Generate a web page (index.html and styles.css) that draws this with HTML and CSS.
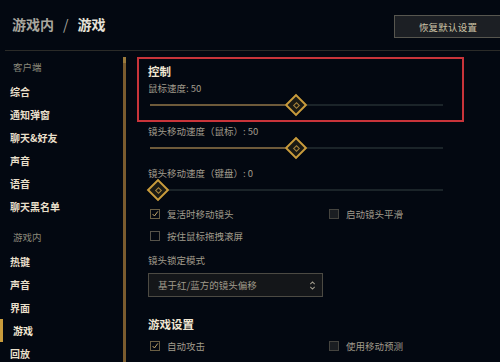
FILE: index.html
```html
<!DOCTYPE html>
<html lang="zh">
<head>
<meta charset="utf-8">
<link rel="stylesheet" href="styles.css">
</head>
<body>
<div class="app">
  <header class="header">
    <div class="crumb"><span class="crumb-parent">游戏内</span><span class="crumb-sep">/</span><span class="crumb-cur">游戏</span></div>
    <button class="reset">恢复默认设置</button>
  </header>
  <div class="main">
    <nav class="sidebar">
      <div class="nav-label">客户端</div>
      <div class="nav-item">综合</div>
      <div class="nav-item">通知弹窗</div>
      <div class="nav-item">聊天&amp;好友</div>
      <div class="nav-item">声音</div>
      <div class="nav-item">语音</div>
      <div class="nav-item">聊天黑名单</div>
      <div class="nav-label gap">游戏内</div>
      <div class="nav-item">热键</div>
      <div class="nav-item">声音</div>
      <div class="nav-item">界面</div>
      <div class="nav-item active">游戏</div>
      <div class="nav-item">回放</div>
    </nav>
    <div class="scrollbar"></div>
    <section class="content">
      <div class="highlight">
        <div class="section-title">控制</div>
        <div class="field-label">鼠标速度: 50</div>
        <div class="slider">
          <div class="track"></div>
          <div class="fill" style="width:146px"></div>
          <div class="thumb" style="left:137px"><span class="thumb-inner"></span></div>
        </div>
      </div>
      <div class="group">
        <div class="field-label">镜头移动速度（鼠标）: 50</div>
        <div class="slider">
          <div class="track"></div>
          <div class="fill" style="width:146px"></div>
          <div class="thumb" style="left:137px"><span class="thumb-inner"></span></div>
        </div>
        <div class="field-label spaced">镜头移动速度（键盘）: 0</div>
        <div class="slider">
          <div class="track"></div>
          <div class="fill" style="width:8px"></div>
          <div class="thumb" style="left:-1px"><span class="thumb-inner"></span></div>
        </div>
        <div class="checks">
          <label class="check"><span class="box checked"><svg viewBox="0 0 10 10" width="10" height="10"><polyline points="2,5 4.3,7.5 8.5,1.8" fill="none" stroke="#c8aa6e" stroke-width="1.2"/></svg></span>复活时移动镜头</label>
          <label class="check"><span class="box filled"></span>启动镜头平滑</label>
          <label class="check"><span class="box"></span>按住鼠标拖拽滚屏</label>
        </div>
        <div class="field-label lock">镜头锁定模式</div>
        <div class="select">
          <span>基于红/蓝方的镜头偏移</span>
          <svg class="arrows" viewBox="0 0 8 12" width="7" height="11"><polyline points="1.5,4.5 4,2 6.5,4.5" fill="none" stroke="#a09b8c" stroke-width="1.2"/><polyline points="1.5,7.5 4,10 6.5,7.5" fill="none" stroke="#a09b8c" stroke-width="1.2"/></svg>
        </div>
        <div class="section-title game">游戏设置</div>
        <div class="checks">
          <label class="check"><span class="box checked"><svg viewBox="0 0 10 10" width="10" height="10"><polyline points="2,5 4.3,7.5 8.5,1.8" fill="none" stroke="#c8aa6e" stroke-width="1.2"/></svg></span>自动攻击</label>
          <label class="check"><span class="box filled"></span>使用移动预测</label>
          <label class="check"><span class="box"></span>显示敌方技能范围指示器（敌人视野）</label>
          <label class="check"><span class="box"></span>始终显示英雄名字</label>
        </div>
      </div>
    </section>
  </div>
</div>
</body>
</html>
```

FILE: styles.css
```css
* { box-sizing: border-box; margin: 0; padding: 0; }
html, body { width: 500px; height: 362px; overflow: hidden; }
body {
  background: #030811;
  font-family: "Noto Sans CJK SC", "Noto Sans", sans-serif;
  color: #a09b8c;
}
.app { display: flex; flex-direction: column; height: 362px; }
.header {
  height: 51px;
  margin-left: 5px;
  padding-left: 7px;
  display: flex;
  align-items: flex-start;
  justify-content: space-between;
  border-bottom: 1px solid #2b2b28;
}
.crumb {
  margin-top: 14px;
  font-size: 14px;
  font-weight: 700;
  line-height: 20px;
  display: flex;
  gap: 9px;
}
.crumb-parent { color: #a8a69e; }
.crumb-sep { color: #a8a69e; font-weight: 400; }
.crumb-cur { color: #e6e2d8; }
.reset {
  margin-top: 15px;
  width: 108px;
  height: 23px;
  margin-right: -2px;
  background: #1c1f24;
  border: 1px solid #57564f;
  color: #cdc3a6;
  font-family: inherit;
  font-size: 9.5px;
  letter-spacing: 0.2px;
}
.main { flex: 1; display: flex; min-height: 0; }
.sidebar { width: 123px; flex-shrink: 0; }
.nav-label {
  height: 20px;
  line-height: 20px;
  margin-top: 6px;
  margin-bottom: 3px;
  padding-left: 13px;
  font-size: 9.5px;
  color: #8a8779;
}
.nav-label.gap { margin-top: 9px; }
.nav-item {
  height: 23px;
  line-height: 23px;
  padding-left: 10px;
  font-size: 10px;
  font-weight: 700;
  color: #e8dfca;
}
.nav-item.active {
  border-left: 3px solid #c89b3c;
  padding-left: 10px;
  color: #f0e6d2;
}
.scrollbar {
  width: 3px;
  flex-shrink: 0;
  margin-top: 6px;
  background: linear-gradient(#9a7a3c 0 6px, #7a5b2e 6px);
}
.content { flex: 1; padding: 6px 0 0 11px; }
.highlight {
  width: 327px;
  border: 2px solid #c9343a;
  padding: 5px 0 5px 9px;
}
.section-title {
  font-size: 11.5px;
  font-weight: 700;
  line-height: 14px;
  color: #f0e6d2;
}
.field-label {
  font-size: 9.5px;
  line-height: 14px;
  color: #a09b8c;
}
.highlight .field-label { margin-top: 3px; }
.field-label.spaced { margin-top: 8px; }
.slider {
  position: relative;
  width: 293px;
  height: 20px;
  margin-left: 2px;
}
.track {
  position: absolute;
  left: 0; right: 0; top: 9px;
  height: 2px;
  background: #1b2429;
}
.fill {
  position: absolute;
  left: 0; top: 9px;
  height: 2px;
  background: #6e5a3a;
}
.thumb {
  position: absolute;
  top: 1px;
  width: 18px;
  height: 18px;
  display: flex;
  align-items: center;
  justify-content: center;
}
.thumb::before {
  content: "";
  position: absolute;
  width: 12px;
  height: 12px;
  transform: rotate(45deg);
  border: 2px solid #c89b3c;
  background: #1a1a14;
}
.thumb-inner {
  position: relative;
  width: 5px;
  height: 5px;
  transform: rotate(45deg);
  border: 1px solid #a8843c;
}
.group { padding: 2px 0 0 11px; }
.checks {
  margin-top: 6px;
  margin-left: 2px;
  display: grid;
  grid-template-columns: 179px 1fr;
  row-gap: 6px;
}
.check {
  display: flex;
  align-items: center;
  gap: 7px;
  height: 16px;
  font-size: 9.5px;
  color: #a09b8c;
  white-space: nowrap;
}
.box {
  width: 10px;
  height: 10px;
  border: 1px solid #56534a;
  flex-shrink: 0;
  display: flex;
  align-items: center;
  justify-content: center;
}
.box svg { display: block; }
.box.checked { border-color: #6a5f44; }
.box.filled { background: #1b1e22; border-color: #45443f; }
.field-label.lock { margin-top: 9px; }
.select {
  margin-top: 6px;
  width: 175px;
  height: 24px;
  border: 1px solid #4c4a43;
  background: #141619;
  display: flex;
  align-items: center;
  justify-content: space-between;
  padding: 0 6px 0 9px;
  font-size: 9.5px;
  color: #a09b8c;
}
.arrows { display: block; }
.section-title.game { margin-top: 19px; line-height: 16px; }
```
